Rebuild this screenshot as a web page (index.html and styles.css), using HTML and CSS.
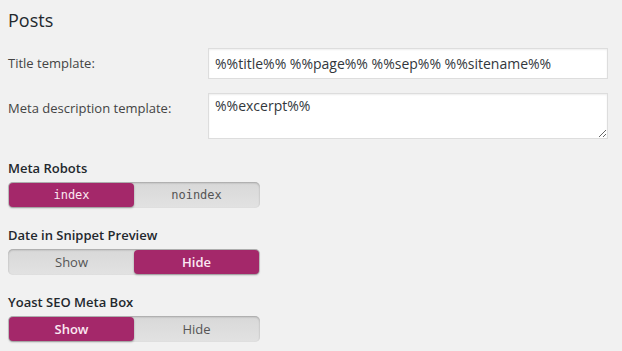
FILE: index.html
```html
<!DOCTYPE html>
<html lang="en">

<head>
    <meta charset="UTF-8" />
    <meta name="viewport" content="width=device-width, initial-scale=1.0" />
    <title>Posts</title>
    <link rel="stylesheet" href="styles.css">
</head>

<body>
    <div class="wrap">
        <h2>Posts</h2>

        <div class="field">
            <label for="title-template">Title template:</label>
            <input type="text" id="title-template" value="%%title%% %%page%% %%sep%% %%sitename%%" />
        </div>
        <div class="field">
            <label for="metadesc-template">Meta description template:</label>
            <textarea id="metadesc-template">%%excerpt%%</textarea>
        </div>

        <div class="switch">
            <span class="switch-title">Meta Robots</span>
            <div class="toggle mono">
                <span class="on">index</span>
                <span>noindex</span>
            </div>
        </div>

        <div class="switch">
            <span class="switch-title">Date in Snippet Preview</span>
            <div class="toggle">
                <span>Show</span>
                <span class="on">Hide</span>
            </div>
        </div>

        <div class="switch">
            <span class="switch-title">Yoast SEO Meta Box</span>
            <div class="toggle">
                <span class="on">Show</span>
                <span>Hide</span>
            </div>
        </div>
    </div>
</body>

</html>
```

FILE: styles.css
```css
html,
body {
    margin: 0;
    padding: 0;
    height: 100%;
}

body {
    background-color: #f1f1f1;
    color: #444;
    font-family: "Open Sans", "Noto Sans", sans-serif;
    font-size: 13px;
}

.wrap {
    padding: 6px 14px 0 8px;
}

h2 {
    margin: 0 0 14px;
    font-size: 18px;
    font-weight: 400;
    color: #23282d;
    line-height: 28px;
}

.field {
    display: grid;
    grid-template-columns: 200px 1fr;
    align-items: start;
    margin-bottom: 14px;
}

.field label {
    padding-top: 6px;
    line-height: 18px;
}

.field input,
.field textarea {
    box-sizing: border-box;
    margin: 0;
    width: 100%;
    border: 1px solid #ddd;
    background: #fff;
    color: #32373c;
    font-family: inherit;
    font-size: 14px;
    padding: 4px 6px;
    box-shadow: inset 0 1px 2px rgba(0, 0, 0, 0.07);
}

.field input {
    height: 31px;
}

.field textarea {
    height: 46px;
    line-height: 18px;
    padding-top: 3px;
    resize: vertical;
}

.switch {
    display: flex;
    flex-flow: column;
    margin-top: 20px;
    margin-bottom: 18px;
}

.switch + .switch {
    margin-top: 0;
}

.switch-title {
    font-weight: 600;
    color: #23282d;
    line-height: 18px;
    margin-bottom: 5px;
}

.toggle {
    display: flex;
    width: 252px;
    height: 26px;
    box-sizing: border-box;
    padding: 1px;
    border-radius: 5px;
    background: linear-gradient(#d8d8d8, #e2e2e2);
    box-shadow: inset 0 1px 2px rgba(0, 0, 0, 0.25);
}

.toggle span {
    flex: 1;
    text-align: center;
    line-height: 24px;
    color: #555;
    border-radius: 4px;
}

.toggle span.on {
    background-color: #a4286a;
    color: #fbe8f2;
    font-weight: 600;
    box-shadow: 0 1px 2px rgba(0, 0, 0, 0.35);
}

.toggle.mono span {
    font-family: "DejaVu Sans Mono", "Liberation Mono", monospace;
    font-size: 12px;
    font-weight: 400;
}
```
